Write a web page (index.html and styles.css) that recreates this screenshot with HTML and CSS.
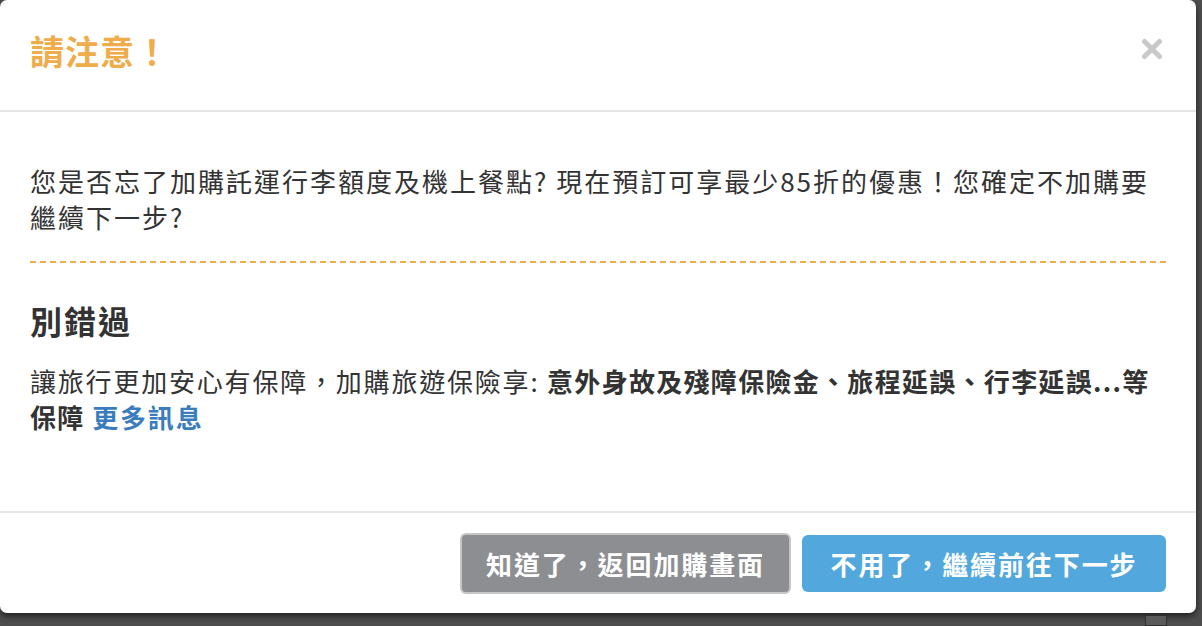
FILE: index.html
```html
<!DOCTYPE html>
<html lang="zh-Hant">
<head>
<meta charset="utf-8">
<title>請注意</title>
<link rel="stylesheet" href="styles.css">
</head>
<body>
<div class="backdrop">
  <div class="modal">
    <div class="modal-header">
      <h2 class="modal-title">請注意！</h2>
      <button class="close" type="button" aria-label="Close">
        <svg width="22" height="22" viewBox="0 0 22 22"><path d="M3.5 3.5 L18.5 18.5 M18.5 3.5 L3.5 18.5" stroke="#c9c9c9" stroke-width="5" stroke-linecap="round"/></svg>
      </button>
    </div>
    <div class="modal-body">
      <p class="notice">您是否忘了加購託運行李額度及機上餐點? 現在預訂可享最少85折的優惠！您確定不加購要繼續下一步?</p>
      <div class="divider"></div>
      <h3 class="promo-title">別錯過</h3>
      <p class="promo">讓旅行更加安心有保障，加購旅遊保險享: <strong>意外身故及殘障保險金、旅程延誤、行李延誤...等保障</strong> <a href="#" class="more">更多訊息</a></p>
    </div>
    <div class="modal-footer">
      <button class="btn btn-back" type="button">知道了，返回加購畫面</button>
      <button class="btn btn-next" type="button">不用了，繼續前往下一步</button>
    </div>
  </div>
  <div class="behind"></div>
</div>
</body>
</html>
```

FILE: styles.css
```css
* { box-sizing: border-box; }
html, body {
  margin: 0;
  padding: 0;
  height: 100%;
}
body {
  background: #4a4a4a;
  font-family: "Noto Sans CJK TC", "Noto Sans", sans-serif;
  color: #333;
  overflow: hidden;
}
.backdrop {
  position: relative;
  width: 1202px;
  height: 626px;
  background: #4d4d4d;
}
.modal {
  width: 1196px;
  height: 613px;
  background: #fff;
  border-radius: 7px;
  box-shadow: 0 3px 6px rgba(0,0,0,0.6);
  display: flex;
  flex-direction: column;
}
.modal-header {
  display: flex;
  align-items: center;
  justify-content: space-between;
  height: 112px;
  padding: 0 33px 8px 30px;
  border-bottom: 2px solid #e5e5e5;
}
.modal-title {
  margin: 0;
  font-size: 34px;
  font-weight: 700;
  color: #efac4b;
  letter-spacing: 1px;
  line-height: 1.3;
}
.close {
  border: 0;
  background: none;
  padding: 0;
  width: 22px;
  height: 22px;
  margin-top: -4px;
  display: flex;
}
.modal-body {
  padding: 51px 30px 0 30px;
  flex: 0 0 401px;
  border-bottom: 2px solid #e5e5e5;
}
.notice, .promo {
  margin: 0;
  font-size: 26px;
  letter-spacing: 2px;
  line-height: 36px;
  color: #333;
}
.promo { letter-spacing: 1.8px; }
.divider {
  height: 2px;
  margin: 26px 0 34px;
  background: repeating-linear-gradient(to right, #efad4e 0 6px, transparent 6px 10px);
}
.promo-title {
  margin: 0 0 20px;
  font-size: 32px;
  font-weight: 700;
  letter-spacing: 2px;
  line-height: 46px;
  color: #333;
}
.promo strong {
  font-weight: 700;
  letter-spacing: 1.3px;
}
.more {
  color: #3a7dbd;
  font-weight: 700;
  text-decoration: none;
}
.modal-footer {
  display: flex;
  justify-content: flex-end;
  align-items: flex-start;
  gap: 11px;
  padding: 20px 30px 0 0;
}
.btn {
  font-family: inherit;
  font-size: 26px;
  font-weight: 700;
  letter-spacing: 1.9px;
  color: #fff;
  border-radius: 6px;
  cursor: pointer;
  line-height: 1;
}
.btn-back {
  height: 61px;
  width: 331px;
  background: #8d8e92;
  border: 2px solid #c6c6c6;
}
.btn-next {
  height: 57px;
  width: 364px;
  margin-top: 2px;
  background: #52a8dc;
  border: 0;
}
.behind {
  position: absolute;
  left: 1145px;
  top: 615px;
  width: 22px;
  height: 11px;
  border: 1px solid #2e2e2e;
  background: #5a5a5a;
}
```
